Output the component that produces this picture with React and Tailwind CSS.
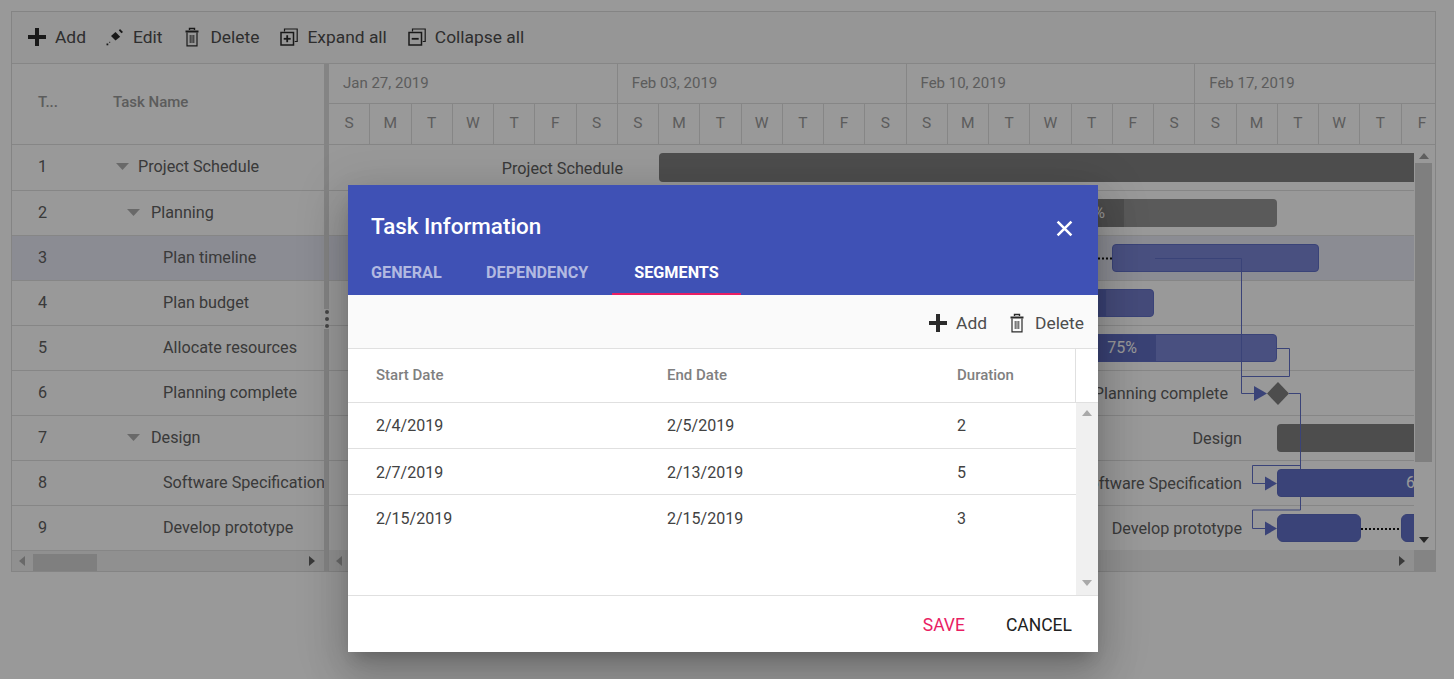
import React from 'react';

const rows = [
  { id: 1, name: 'Project Schedule', pad: 'pl-[3px]', arrow: 'mr-[9px]' },
  { id: 2, name: 'Planning', pad: 'pl-[14px]', arrow: 'mr-[11px]' },
  { id: 3, name: 'Plan timeline', pad: 'pl-[50px]', active: true },
  { id: 4, name: 'Plan budget', pad: 'pl-[50px]' },
  { id: 5, name: 'Allocate resources', pad: 'pl-[50px]' },
  { id: 6, name: 'Planning complete', pad: 'pl-[50px]' },
  { id: 7, name: 'Design', pad: 'pl-[14px]', arrow: 'mr-[11px]' },
  { id: 8, name: 'Software Specification', pad: 'pl-[50px]' },
  { id: 9, name: 'Develop prototype', pad: 'pl-[50px]' },
];

const weeks = ['Jan 27, 2019', 'Feb 03, 2019', 'Feb 10, 2019', 'Feb 17, 2019'];
const days = ['S', 'M', 'T', 'W', 'T', 'F', 'S'];
const segments = [
  ['2/4/2019', '2/5/2019', '2'],
  ['2/7/2019', '2/13/2019', '5'],
  ['2/15/2019', '2/15/2019', '3'],
];

const PlusIcon = () => (
  <svg width="18" height="18" viewBox="0 0 18 18"><path d="M7 0h4v7h7v4h-7v7H7v-7H0V7h7z" fill="#2b2b2b" /></svg>
);
const EditIcon = () => (
  <svg width="18" height="18" viewBox="0 0 18 18">
    <path d="M9.500 4l4.700 4.800-4.700 3.700-4.500-4.500z" fill="#2b2b2b" />
    <path d="M12.800 2.500l1.200-1.500 3 3-1.500 1.200z" fill="#2b2b2b" />
    <rect x="0.500" y="15.500" width="1.800" height="1.800" fill="#2b2b2b" />
    <rect x="3.200" y="13.800" width="1" height="1" fill="#2b2b2b" />
  </svg>
);
const TrashIcon = () => (
  <svg width="18" height="20" viewBox="0 0 18 20" fill="none" stroke="#2b2b2b">
    <path d="M2.500 4.500h13" strokeWidth="2" />
    <path d="M6.500 3V1.500h5V3" strokeWidth="1.400" />
    <path d="M4 5.500v13.300h10V5.500" strokeWidth="1.200" />
    <path d="M7.200 8v8M9 8v8M10.800 8v8" strokeWidth="0.900" />
  </svg>
);
const StackIcon = ({ plus }) => (
  <svg width="18" height="18" viewBox="0 0 18 18" fill="none" stroke="#2b2b2b" strokeWidth="1.500">
    <path d="M4.500 3.500V1h12.700v12.500h-2.500" strokeWidth="1.200" />
    <rect x="1" y="4.500" width="12.500" height="12.500" />
    <path d="M3.700 10.800h7" strokeWidth="1.800" />
    {plus && <path d="M7.200 7.200v7" strokeWidth="1.800" />}
  </svg>
);

const Tool = ({ icon, label, className }) => (
  <div className={`flex items-center gap-[9px] text-[17.400px] text-[#4d4d4d] ${className}`}>
    <span className="flex h-5 w-[18px] items-center justify-center">{icon}</span>
    <span>{label}</span>
  </div>
);

const Tri = ({ dir }) => {
  const d = { up: 'M0 7L5 1l5 6z', down: 'M0 1l5 6 5-6z', left: 'M7 0L1 5l6 5z', right: 'M1 0l6 5-6 5z' }[dir];
  return <svg width="10" height="10" viewBox="0 0 10 10"><path d={d} fill="currentColor" /></svg>;
};

function TreeGrid() {
  return (
    <div className="flex h-full w-[312px] shrink-0 flex-col">
      <div className="flex h-[81px] shrink-0 items-center border-b border-[#e0e0e0] pb-[4px] text-[15px] font-medium text-[#9a9a9a]">
        <span className="w-[101px] pl-[26px]">T...</span>
        <span>Task Name</span>
      </div>
      {rows.map((r) => (
        <div
          key={r.id}
          className={`flex shrink-0 items-center overflow-hidden border-b border-[#e0e0e0] text-[16.200px] text-[#616161] ${r.id === 1 ? 'h-[46px] pb-[1px]' : 'h-[45px]'} ${r.active ? 'bg-[#e8eaf6]' : ''}`}
        >
          <span className="w-[101px] shrink-0 pl-[26px]">{r.id}</span>
          <span className={`flex items-center whitespace-nowrap ${r.pad}`}>
            {r.arrow && (
              <svg className={r.arrow} width="13" height="7" viewBox="0 0 13 7"><path d="M0 0h13L6.500 7z" fill="#b0b0b0" /></svg>
            )}
            {r.name}
          </span>
        </div>
      ))}
      <div className="relative flex flex-1 items-center justify-between bg-[#f0f0f0] px-[6px] text-[#616161]">
        <span className="text-[#b0b0b0]"><Tri dir="left" /></span>
        <div className="absolute bottom-0 left-[21px] h-[17px] w-[64px] bg-[#d4d4d4]" />
        <Tri dir="right" />
      </div>
    </div>
  );
}

const Bar = ({ className, children }) => <div className={`absolute ${className}`}>{children}</div>;

const Label = ({ className, children }) => (
  <span className={`absolute whitespace-nowrap text-right text-[16.200px] leading-[20px] text-[#616161] ${className}`}>{children}</span>
);

function Chart() {
  return (
    <div className="flex h-full min-w-0 flex-1 flex-col">
      <div className="h-[81px] shrink-0 overflow-hidden border-b border-[#e0e0e0]">
        <div className="flex h-10 w-[1155px] border-b border-[#e0e0e0]">
          {weeks.map((w) => (
            <div key={w} className="flex w-[288.750px] shrink-0 items-center border-r border-[#e0e0e0] pl-[14px] text-[15px] text-[#9a9a9a]">
              {w}
            </div>
          ))}
        </div>
        <div className="flex h-10 w-[1105px]">
          {[0, 1, 2, 3].flatMap((w) =>
            days.slice(0, w === 3 ? 6 : 7).map((d, i) => (
              <div key={`${w}-${i}`} className="flex w-[41.250px] shrink-0 items-center justify-center border-r border-[#e0e0e0] text-[15.500px] text-[#9a9a9a] last:border-r-0">
                {d}
              </div>
            ))
          )}
        </div>
      </div>

      <div className="flex min-h-0 flex-1">
        <div className="relative min-w-0 flex-1 overflow-hidden">
          {rows.map((r) => (
            <div key={r.id} className={`border-b border-[#e0e0e0] ${r.id === 1 ? 'h-[46px]' : 'h-[45px]'} ${r.active ? 'bg-[#e8eaf6]' : ''}`} />
          ))}

          <Label className="right-[791px] top-[14px]">Project Schedule</Label>
          <Bar className="left-[330px] top-[8px] h-[29px] w-[760px] rounded-[4px] bg-[#808080]" />

          <Bar className="left-[330px] top-[54px] h-[28px] w-[618px] overflow-hidden rounded-[4px] bg-[#969696]">
            <div className="flex h-full w-[465px] items-center justify-end bg-[#808080] pr-[19px] text-[16px] text-white">60%</div>
          </Bar>

          <Bar className="left-[783px] top-[99px] h-[28px] w-[207px] rounded-[4px] border border-[#6271c8] bg-[#7b85d5]" />

          <Bar className="left-[600px] top-[144px] h-[28px] w-[225px] overflow-hidden rounded-[4px] border border-[#6271c8] bg-[#747dcb]">
            <div className="h-full w-[176px] bg-[#616ec3]" />
          </Bar>

          <Bar className="left-[600px] top-[189px] h-[28px] w-[348px] overflow-hidden rounded-[4px] border border-[#6271c8] bg-[#7b85d5]">
            <div className="flex h-full w-[226px] items-center justify-end bg-[#616ec3] pr-[19px] text-[16px] text-white">75%</div>
          </Bar>

          <Label className="right-[186px] top-[239px]">Planning complete</Label>
          <Label className="right-[172px] top-[284px]">Design</Label>
          <Bar className="left-[948px] top-[279px] h-[28px] w-[200px] rounded-[4px] bg-[#808080]" />
          <Label className="right-[172px] top-[329px]">Software Specification</Label>
          <Label className="right-[172px] top-[374px]">Develop prototype</Label>

          {/* dependency lines, drawn in page coordinates */}
          <svg className="absolute left-0 top-0" width="1085" height="405" viewBox="329 145 1085 405" fill="none">
            <path d="M1098 258.500h14" stroke="#111" strokeWidth="2" strokeDasharray="2 2" />
            <path d="M1361 529h40" stroke="#111" strokeWidth="2" strokeDasharray="2 2" />
            <path d="M1155 258.500h86.500v135h13M1277 348.500h12.500v28h-48" stroke="#6271c8" />
            <path d="M1289 393.500h11.500v116.500h-48v18.500h13M1300.500 465.500h-48v18h13" stroke="#6271c8" />
            <path d="M1254 386l13 7.500-13 7.500z" fill="#6271c8" />
            <path d="M1265 476.500l12 7-12 7zM1265 521.500l12 7-12 7z" fill="#6271c8" />
            <path d="M1278 382l11 11.500-11 11.500-11-11.500z" fill="#808080" />
          </svg>

          <Bar className="left-[948px] top-[324px] h-[28px] w-[200px] rounded-[4px] border border-[#5c6bc0] bg-[#6271c8] text-[16px] leading-[26px] text-white">
            <span className="absolute left-[128px]">60%</span>
          </Bar>
          <Bar className="left-[948px] top-[369px] h-[28px] w-[84px] rounded-[6px] border border-[#5c6bc0] bg-[#6271c8]" />
          <Bar className="left-[1072px] top-[369px] h-[28px] w-[60px] rounded-[6px] border border-[#5c6bc0] bg-[#6271c8]" />
        </div>

        <div className="flex w-[21px] shrink-0 flex-col items-center pr-[2px] text-[#9e9e9e]">
          <span className="pt-[7px]"><Tri dir="up" /></span>
          <div className="mt-[1px] h-[299px] w-[17px] bg-[#d4d4d4]" />
          <span className="mt-auto pb-[4px] text-[#424242]"><Tri dir="down" /></span>
        </div>
      </div>

      <div className="flex h-[21px] shrink-0 items-center">
        <div className="flex h-full flex-1 items-center justify-between bg-[#f0f0f0] px-[6px] text-[#616161]">
          <span className="text-[#b0b0b0]"><Tri dir="left" /></span>
          <Tri dir="right" />
        </div>
        <div className="h-full w-[21px] bg-[#dcdcdc]" />
      </div>
    </div>
  );
}

function Dialog() {
  return (
    <div className="absolute left-[348px] top-[185px] flex h-[467px] w-[750px] flex-col bg-white shadow-[0_11px_15px_-7px_rgba(0,0,0,0.2),0_24px_38px_3px_rgba(0,0,0,0.14),0_9px_46px_8px_rgba(0,0,0,0.12)]">
      <div className="h-[110px] shrink-0 bg-[#3f51b5] text-white">
        <div className="flex h-[72px] items-end justify-between pb-[17px] pl-[23px] pr-[25px]">
          <span className="text-[22.400px] font-medium leading-[28px]">Task Information</span>
          <svg className="mb-[3px]" width="17" height="17" viewBox="0 0 16 16"><path d="M1.500 1.500l13 13M14.500 1.500l-13 13" stroke="#fff" strokeWidth="2.400" /></svg>
        </div>
        <div className="flex h-[38px] text-[16.200px] font-bold">
          <span className="flex w-[138px] justify-start pl-[23px] pt-[4px] text-[#b2b9e1]">GENERAL</span>
          <span className="flex w-[126px] justify-start pt-[4px] text-[#b2b9e1]">DEPENDENCY</span>
          <span className="flex w-[129px] justify-center border-b-2 border-[#e91e63] pt-[4px]">SEGMENTS</span>
        </div>
      </div>

      <div className="flex h-[54px] shrink-0 items-center justify-end gap-[21px] border-b border-[#e0e0e0] bg-[#fafafa] pr-[14px] pt-[4px]">
        <Tool icon={<PlusIcon />} label="Add" />
        <Tool icon={<TrashIcon />} label="Delete" />
      </div>

      <div className="flex h-[54px] shrink-0 items-center border-b border-[#e0e0e0] text-[15px] font-medium text-[#808080]">
        <span className="w-[291px] pl-[28px]">Start Date</span>
        <span className="w-[290px] pl-[28px]">End Date</span>
        <span className="h-full w-[147px] border-r border-[#e0e0e0] pl-[28px] leading-[52px]">Duration</span>
      </div>

      <div className="flex min-h-0 flex-1 border-b border-[#e0e0e0]">
        <div className="min-w-0 flex-1">
          {segments.map((s, i) => (
            <div key={i} className={`flex h-[46px] items-center border-b border-[#e0e0e0] text-[16px] text-[#424242] last:border-b-0 ${i > 0 ? 'pt-[2px]' : ''}`}>
              <span className="w-[291px] pl-[28px]">{s[0]}</span>
              <span className="w-[290px] pl-[28px]">{s[1]}</span>
              <span className="pl-[28px]">{s[2]}</span>
            </div>
          ))}
        </div>
        <div className="flex w-[22px] shrink-0 flex-col items-center justify-between bg-[#f0f0f0] py-[6px] text-[#a9a9a9]">
          <Tri dir="up" />
          <Tri dir="down" />
        </div>
      </div>

      <div className="flex h-[56px] shrink-0 items-center justify-end gap-[41px] pr-[26px] pt-[2px] text-[17.500px]">
        <span className="text-[#e91e63]">SAVE</span>
        <span className="text-[#212121]">CANCEL</span>
      </div>
    </div>
  );
}

export default function App() {
  return (
    <div className="relative h-[679px] w-[1454px] overflow-hidden bg-white p-[11px] font-['Roboto',sans-serif]">
      <div className="flex h-[561px] w-[1425px] flex-col border border-[#dcdcdc]">
        <div className="flex h-[52px] shrink-0 items-center border-b border-[#e0e0e0] bg-[#fafafa] pl-[16px]">
          <Tool icon={<PlusIcon />} label="Add" className="mr-[20px]" />
          <Tool icon={<EditIcon />} label="Edit" className="mr-[21px]" />
          <Tool icon={<TrashIcon />} label="Delete" className="mr-[21px]" />
          <Tool icon={<StackIcon plus />} label="Expand all" className="mr-[21px]" />
          <Tool icon={<StackIcon />} label="Collapse all" />
        </div>
        <div className="flex min-h-0 flex-1">
          <TreeGrid />
          <div className="relative w-[5px] shrink-0 bg-[#dcdcdc]">
            <div className="absolute left-0 top-[245px] flex h-[20px] w-[5px] flex-col items-center justify-between bg-white py-[1px]">
              <span className="h-1 w-1 rounded-full bg-[#757575]" />
              <span className="h-1 w-1 rounded-full bg-[#757575]" />
              <span className="h-1 w-1 rounded-full bg-[#757575]" />
            </div>
          </div>
          <Chart />
        </div>
      </div>

      <div className="absolute inset-0 bg-black/40" />
      <Dialog />
    </div>
  );
}
